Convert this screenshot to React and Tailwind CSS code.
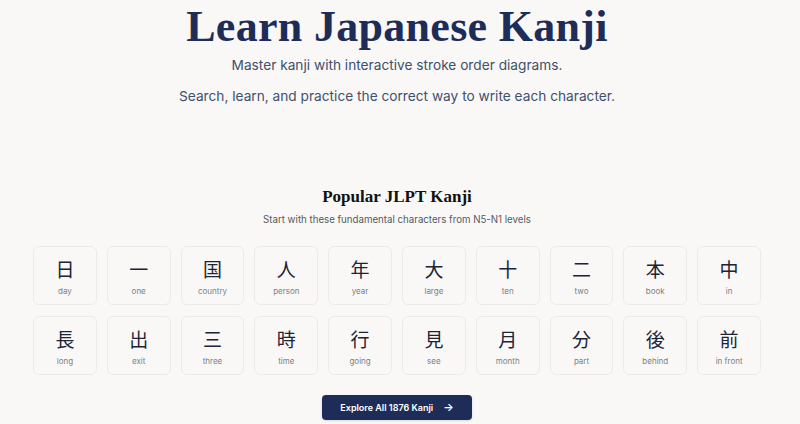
import React from "react";

const kanji = [
  ["日", "day"], ["一", "one"], ["国", "country"], ["人", "person"], ["年", "year"],
  ["大", "large"], ["十", "ten"], ["二", "two"], ["本", "book"], ["中", "in"],
  ["長", "long"], ["出", "exit"], ["三", "three"], ["時", "time"], ["行", "going"],
  ["見", "see"], ["月", "month"], ["分", "part"], ["後", "behind"], ["前", "in front"],
];

export default function App() {
  return (
    <div className="w-[800px] h-[424px] overflow-hidden bg-[#f9f8f7] pr-[6px]" style={{ fontFamily: 'Inter, "Noto Sans", sans-serif' }}>
      <div className="flex flex-col items-center">
        <h1 className="mt-[2px] text-[44px] leading-[50px] tracking-[0.3px] font-bold text-[#1e2d57]" style={{ fontFamily: '"Liberation Serif", serif' }}>
          Learn Japanese Kanji
        </h1>
        <p className="mt-[3px] text-[13.7px] leading-[20px] text-[#3f506b]">Master kanji with interactive stroke order diagrams.</p>
        <p className="mt-[11px] text-[13.7px] leading-[20px] text-[#3f506b]">Search, learn, and practice the correct way to write each character.</p>

        <h2 className="mt-[80px] text-[17px] leading-[22px] font-bold text-[#111111]" style={{ fontFamily: '"Liberation Serif", serif' }}>
          Popular JLPT Kanji
        </h2>
        <p className="mt-[5px] text-[9.7px] leading-[14px] text-[#555a61]">Start with these fundamental characters from N5-N1 levels</p>

        <div className="mt-[19px] w-[728px] grid grid-cols-10 gap-x-[10px] gap-y-[11px]">
          {kanji.map(([k, m]) => (
            <div key={k} className="h-[59px] rounded-[6px] border border-[#ecebe8] bg-[#f9f8f7] flex flex-col items-center pt-[11px]">
              <span className="text-[19px] leading-[22px] text-[#1c2438]" style={{ fontFamily: '"Noto Sans CJK JP", sans-serif' }}>{k}</span>
              <span className="mt-[6px] text-[8px] leading-[10px] text-[#7a7f87]">{m}</span>
            </div>
          ))}
        </div>

        <button className="mt-[20px] w-[150px] h-[25px] rounded-[4px] bg-[#1e2d57] text-white text-[9px] font-semibold flex items-center justify-center gap-[10px] shadow-sm">
          <span>Explore All 1876 Kanji</span>
          <span className="text-[11px] leading-[11px]">→</span>
        </button>
      </div>
    </div>
  );
}
